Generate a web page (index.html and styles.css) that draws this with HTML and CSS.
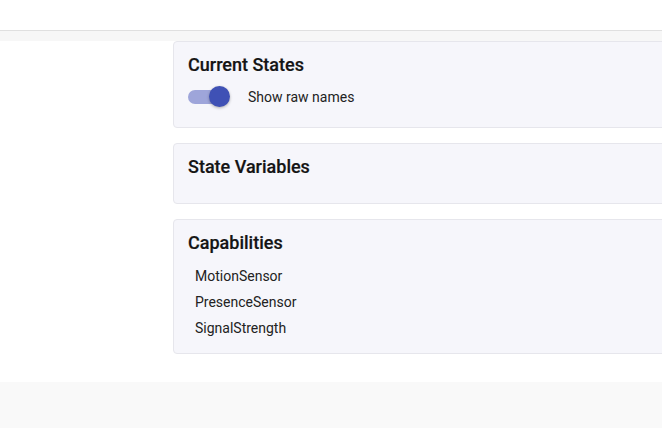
FILE: index.html
```html
<!DOCTYPE html>
<html>
<head>
<meta charset="utf-8">
<link rel="stylesheet" href="styles.css">
</head>
<body>
<header class="topbar"></header>
<div class="band"></div>
<main class="content">
  <aside class="side"></aside>
  <section class="cards">
    <div class="card card-states">
      <h2 class="card-title">Current States</h2>
      <label class="toggle-row">
        <span class="switch"><span class="track"></span><span class="thumb"></span></span>
        <span class="toggle-label">Show raw names</span>
      </label>
    </div>
    <div class="card card-vars">
      <h2 class="card-title">State Variables</h2>
    </div>
    <div class="card card-caps">
      <h2 class="card-title">Capabilities</h2>
      <ul class="cap-list">
        <li>MotionSensor</li>
        <li>PresenceSensor</li>
        <li>SignalStrength</li>
      </ul>
    </div>
  </section>
</main>
<footer class="bottom"></footer>
</body>
</html>
```
FILE: styles.css
```css
* { box-sizing: border-box; }
html, body { margin: 0; padding: 0; }
body {
  font-family: Roboto, "Noto Sans", sans-serif;
  color: #1f1f1f;
  background: #fff;
  width: 662px;
  height: 428px;
  overflow: hidden;
}
.topbar {
  height: 31px;
  background: #fff;
  border-bottom: 1px solid #e0e0e0;
}
.band {
  height: 10px;
  background: #f7f7f7;
}
.content {
  display: flex;
  height: 341px;
  background: #fff;
}
.side {
  width: 173px;
  flex: none;
}
.cards {
  flex: 1;
  display: flex;
  flex-direction: column;
  gap: 15px;
  margin-right: -10px;
}
.card {
  background: #f6f6fb;
  border: 1px solid #e6e6ec;
  border-radius: 4px;
  padding: 11px 14px 12px;
}
.card-title {
  margin: 0;
  font-size: 18px;
  font-weight: 500;
  line-height: 24px;
  color: #141414;
  -webkit-text-stroke: 0.2px #141414;
}
.card-states { height: 87px; }
.card-vars { height: 61px; }
.card-caps { height: 135px; }
.toggle-row {
  display: flex;
  align-items: center;
  margin-top: 8px;
  height: 24px;
}
.switch {
  position: relative;
  width: 42px;
  height: 22px;
  flex: none;
}
.track {
  position: absolute;
  left: 0;
  top: 4px;
  width: 36px;
  height: 14px;
  border-radius: 7px;
  background: #9ea5da;
}
.thumb {
  position: absolute;
  left: 21px;
  top: 0;
  width: 21px;
  height: 21px;
  border-radius: 50%;
  background: #3f51b5;
  box-shadow: 0 1px 3px rgba(0,0,0,0.3);
}
.toggle-label {
  margin-left: 18px;
  font-size: 14px;
  color: #222;
}
.cap-list {
  list-style: none;
  margin: 8px 0 0;
  padding: 0 0 0 7px;
  font-size: 14px;
  color: #222;
}
.cap-list li {
  line-height: 26px;
  height: 26px;
}
.bottom {
  height: 46px;
  background: #f9f9f9;
}
```
